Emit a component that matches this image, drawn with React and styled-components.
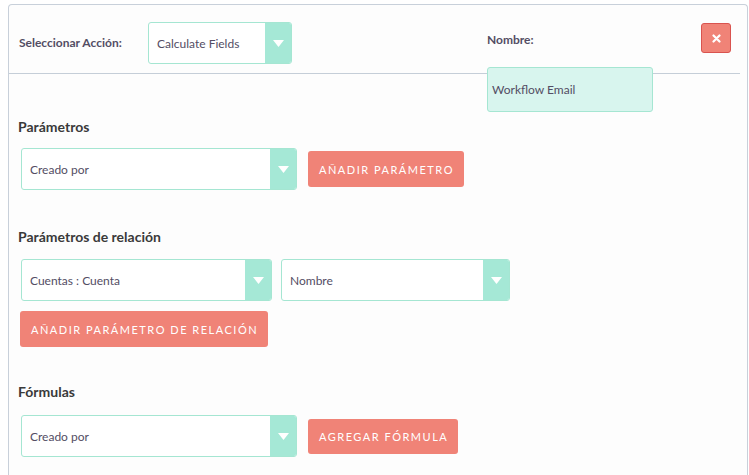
import React from 'react';
import styled, { createGlobalStyle } from 'styled-components';

const GlobalStyle = createGlobalStyle`
  body {
    margin: 0;
    background: #ffffff;
    font-family: 'Lato', 'Liberation Sans', sans-serif;
    color: #534d64;
  }
`;

const Panel = styled.div`
  margin: 4px 1px 0 8px;
  height: 480px;
  border: 1px solid #c8d0da;
  border-bottom: none;
  border-radius: 4px 4px 0 0;
  background: #fdfdfd;
`;

const Header = styled.div`
  display: flex;
  align-items: flex-start;
  height: 68px;
  margin-right: 7px;
  padding-left: 10px;
  border-bottom: 1px solid #c5ced8;
`;

const ActionGroup = styled.div`
  display: flex;
  align-items: center;
  height: 42px;
  margin-top: 17px;
`;

const HeadLabel = styled.div`
  width: ${p => p.$width || 'auto'};
  font-size: 12px;
  font-weight: 700;
  line-height: 16px;
  color: #534d64;
`;

const NameGroup = styled.div`
  margin-left: auto;
  width: 166px;
  padding-top: 27px;
  display: flex;
  flex-direction: column;
  gap: 19px;
`;

const NameInput = styled.div`
  box-sizing: border-box;
  height: 45px;
  padding: 0 4px;
  display: flex;
  align-items: center;
  background: #d8f5ee;
  border: 1px solid #a5e6d2;
  border-radius: 3px;
  font-size: 12px;
  color: #534d64;
  position: relative;
`;

const CloseButton = styled.button`
  box-sizing: border-box;
  width: 30px;
  height: 30px;
  margin: 18px 9px 0 48px;
  padding: 0;
  display: flex;
  align-items: center;
  justify-content: center;
  background: #f08377;
  border: 1px solid #d9534f;
  border-radius: 3px;
`;

const Body = styled.div`
  padding: 0 9px;
`;

const Heading = styled.h3`
  margin: ${p => p.$top}px 0 0 0;
  font-size: 14px;
  font-weight: 700;
  line-height: 17px;
  color: #3a3a3a;
`;

const Row = styled.div`
  display: flex;
  align-items: center;
  gap: ${p => p.$gap || 11}px;
  margin-top: ${p => p.$top}px;
  padding-left: ${p => (p.$indent ?? 3)}px;
`;

const SelectBox = styled.div`
  box-sizing: border-box;
  width: ${p => p.$width}px;
  height: 42px;
  display: flex;
  align-items: stretch;
  background: #ffffff;
  border: 1px solid #a5e6d2;
  border-radius: 3px;
  overflow: hidden;
`;

const SelectText = styled.div`
  flex: 1;
  display: flex;
  align-items: center;
  padding-left: 8px;
  font-size: 12px;
  color: #534d64;
`;

const Arrow = styled.div`
  width: 26px;
  display: flex;
  align-items: center;
  justify-content: center;
  background: #a5e8d6;
`;

const ActionButton = styled.button`
  box-sizing: border-box;
  height: ${p => p.$height || 36}px;
  padding: 0 10px 0 11px;
  background: #f08377;
  border: none;
  border-radius: 3px;
  font-family: 'Lato', 'Liberation Sans', sans-serif;
  font-size: 11px;
  letter-spacing: 1.5px;
  color: #ffffff;
`;

const Triangle = () => (
  <svg width="11" height="7" viewBox="0 0 11 7">
    <path d="M0 0 H11 L5.5 7 Z" fill="#ffffff" />
  </svg>
);

const Select = ({ width, children }) => (
  <SelectBox $width={width}>
    <SelectText>{children}</SelectText>
    <Arrow>
      <Triangle />
    </Arrow>
  </SelectBox>
);

export default function App() {
  return (
    <>
      <GlobalStyle />
      <Panel>
        <Header>
          <ActionGroup>
            <HeadLabel $width="129px">Seleccionar Acción:</HeadLabel>
            <Select width={144}>Calculate Fields</Select>
          </ActionGroup>
          <NameGroup>
            <HeadLabel>Nombre:</HeadLabel>
            <NameInput>Workflow Email</NameInput>
          </NameGroup>
          <CloseButton>
            <svg width="9" height="9" viewBox="0 0 9 9">
              <path d="M1.5 1.5 L7.5 7.5 M7.5 1.5 L1.5 7.5" stroke="#ffffff" strokeWidth="2.2" strokeLinecap="round" />
            </svg>
          </CloseButton>
        </Header>
        <Body>
          <Heading $top={44}>Parámetros</Heading>
          <Row $top={13}>
            <Select width={276}>Creado por</Select>
            <ActionButton>AÑADIR PARÁMETRO</ActionButton>
          </Row>

          <Heading $top={38}>Parámetros de relación</Heading>
          <Row $top={14} $gap={9}>
            <Select width={251}>Cuentas : Cuenta</Select>
            <Select width={229}>Nombre</Select>
          </Row>
          <Row $top={10} $indent={2}>
            <ActionButton>AÑADIR PARÁMETRO DE RELACIÓN</ActionButton>
          </Row>

          <Heading $top={36}>Fórmulas</Heading>
          <Row $top={15}>
            <Select width={276}>Creado por</Select>
            <ActionButton $height={35}>AGREGAR FÓRMULA</ActionButton>
          </Row>
        </Body>
      </Panel>
    </>
  );
}
